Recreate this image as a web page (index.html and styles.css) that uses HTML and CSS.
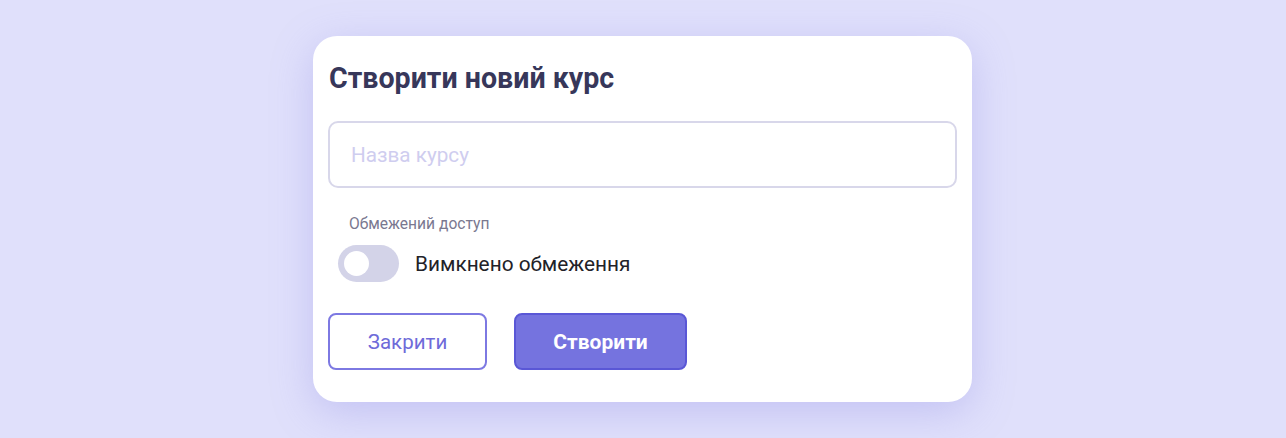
FILE: index.html
```html
<!DOCTYPE html>
<html>
  <head>
    <title>Створити новий курс</title>
    <link rel="stylesheet" href="styles.css">
  </head>
  <body>
    <div class="page">
      <div class="modal">
        <h2>Створити новий курс</h2>

        <input class="course-name" type="text" placeholder="Назва курсу" />

        <div class="access">
          <div class="access-label">Обмежений доступ</div>
          <label class="switch-row">
            <span class="switch"><span class="knob"></span></span>
            <span class="switch-text">Вимкнено обмеження</span>
          </label>
        </div>

        <div class="buttons">
          <button class="btn btn-outline">Закрити</button>
          <button class="btn btn-primary">Створити</button>
        </div>
      </div>
    </div>
  </body>
</html>
```

FILE: styles.css
```css
body {
  margin: 0;
  font-family: Roboto, "Noto Sans", Arial, sans-serif;
  background-color: #e0e0fb;
  color: #1f1f2e;
}
.page {
  display: flex;
  justify-content: center;
  padding-top: 36px;
  padding-right: 1px;
  height: 438px;
  box-sizing: border-box;
}
.modal {
  width: 659px;
  height: 366px;
  box-sizing: border-box;
  padding: 20px 15px 0 15px;
  background-color: #ffffff;
  border-radius: 24px;
  box-shadow: 0 10px 40px rgba(140, 138, 230, 0.35);
}
h2 {
  margin: 0 0 0 1px;
  font-size: 28.6px;
  font-weight: 700;
  color: #37375a;
  line-height: 44px;
}
.course-name {
  display: block;
  width: 629px;
  height: 67px;
  margin-top: 21px;
  padding: 0 21px;
  box-sizing: border-box;
  border: 2.5px solid #d8d7ea;
  border-radius: 10px;
  font-family: inherit;
  font-size: 20.7px;
  color: #1f1f2e;
  outline: none;
}
.course-name::placeholder {
  color: #cfcdef;
}
.access {
  padding-left: 10px;
  margin-top: 26px;
}
.access-label {
  padding-left: 11px;
  font-size: 15.6px;
  color: #7a7890;
  line-height: 20px;
}
.switch-row {
  display: flex;
  align-items: center;
  gap: 16px;
  margin-top: 11px;
}
.switch {
  display: flex;
  align-items: center;
  width: 61px;
  height: 37px;
  padding: 0 6px;
  box-sizing: border-box;
  border-radius: 19px;
  background-color: #d3d3e8;
}
.knob {
  width: 25px;
  height: 25px;
  border-radius: 50%;
  background-color: #ffffff;
}
.switch-text {
  font-size: 20.8px;
  color: #222228;
}
.buttons {
  display: flex;
  gap: 27px;
  margin-top: 31px;
}
.btn {
  height: 57px;
  border-radius: 8px;
  font-family: inherit;
  font-size: 20.5px;
  cursor: pointer;
}
.btn-outline {
  width: 159px;
  border: 2px solid #7d79e2;
  background-color: #ffffff;
  color: #6f6bd9;
}
.btn-primary {
  width: 173px;
  border: 2px solid #5a57d6;
  background-color: #7573df;
  color: #ffffff;
  font-size: 21px;
  font-weight: 700;
}
```
